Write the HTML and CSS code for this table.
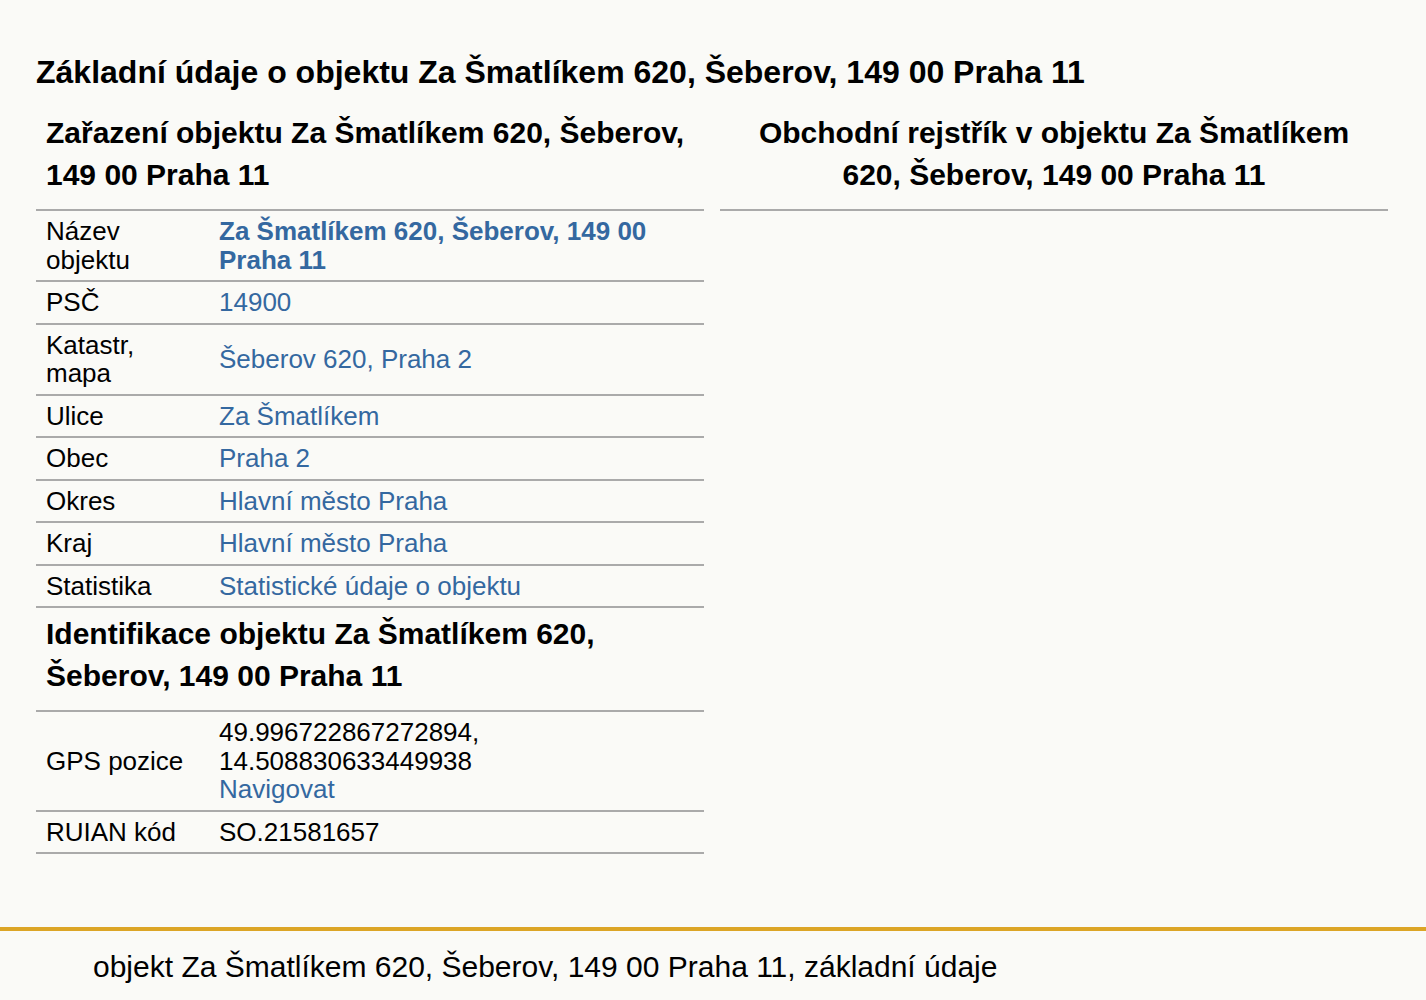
FILE: index.html
```html
<!DOCTYPE html>
<html>
  <head>
    <meta charset="utf-8">
    <title>Za Šmatlíkem 620, Šeberov, 149 00 Praha 11</title>
    <link rel="stylesheet" href="styles.css">
  </head>
  <body>
    <div class="page">
      <h1>Základní údaje o objektu Za Šmatlíkem 620, Šeberov, 149 00 Praha 11</h1>

      <div class="columns">
        <div class="col">
          <h2>Zařazení objektu Za Šmatlíkem 620, Šeberov, 149 00 Praha 11</h2>
          <table class="info">
            <tr>
              <th>Název objektu</th>
              <td><a href="#"><strong>Za Šmatlíkem 620, Šeberov, 149 00 Praha 11</strong></a></td>
            </tr>
            <tr>
              <th>PSČ</th>
              <td><a href="#">14900</a></td>
            </tr>
            <tr>
              <th>Katastr, mapa</th>
              <td><a href="#">Šeberov 620, Praha 2</a></td>
            </tr>
            <tr>
              <th>Ulice</th>
              <td><a href="#">Za Šmatlíkem</a></td>
            </tr>
            <tr>
              <th>Obec</th>
              <td><a href="#">Praha 2</a></td>
            </tr>
            <tr>
              <th>Okres</th>
              <td><a href="#">Hlavní město Praha</a></td>
            </tr>
            <tr>
              <th>Kraj</th>
              <td><a href="#">Hlavní město Praha</a></td>
            </tr>
            <tr>
              <th>Statistika</th>
              <td><a href="#">Statistické údaje o objektu</a></td>
            </tr>
          </table>

          <h2>Identifikace objektu Za Šmatlíkem 620, Šeberov, 149 00 Praha 11</h2>
          <table class="info">
            <tr>
              <th>GPS pozice</th>
              <td>49.996722867272894,<br>14.508830633449938<br><a href="#">Navigovat</a></td>
            </tr>
            <tr>
              <th>RUIAN kód</th>
              <td>SO.21581657</td>
            </tr>
          </table>
        </div>

        <div class="col">
          <h2 class="center">Obchodní rejstřík v objektu Za Šmatlíkem 620, Šeberov, 149 00 Praha 11</h2>
        </div>
      </div>
    </div>

    <footer>
      <p>objekt Za Šmatlíkem 620, Šeberov, 149 00 Praha 11, základní údaje</p>
    </footer>
  </body>
</html>
```

FILE: styles.css
```css
body {
  font-family: "Liberation Sans", Arial, sans-serif;
  background-color: #fafaf7;
  color: #000;
  margin: 0;
}
.page {
  padding: 49px 38px 73px 36px;
}
h1 {
  font-size: 32px;
  margin: 0 0 12px 0;
  line-height: 46px;
}
.columns {
  display: grid;
  grid-template-columns: 1fr 1fr;
  gap: 16px;
}
h2 {
  font-size: 30px;
  line-height: 42px;
  margin: 0;
  padding: 5px 10px 13px 10px;
  border-bottom: 2px solid #aaa;
}
h2.center {
  text-align: center;
}
.info {
  width: 100%;
  border-collapse: collapse;
  font-size: 26px;
  line-height: 28.5px;
}
.info th,
.info td {
  border-bottom: 2px solid #aaa;
  padding: 6px 10px 6px 10px;
  vertical-align: middle;
  text-align: left;
  font-weight: normal;
}
.info th {
  width: 155px;
  padding-right: 18px;
}
.info td {
  padding-left: 0;
}
a {
  color: #3468a0;
  text-decoration: none;
}
footer {
  border-top: 4px solid #dca526;
  padding: 11px 0 0 93px;
}
footer p {
  margin: 0;
  font-size: 30px;
  line-height: 50px;
}
```
